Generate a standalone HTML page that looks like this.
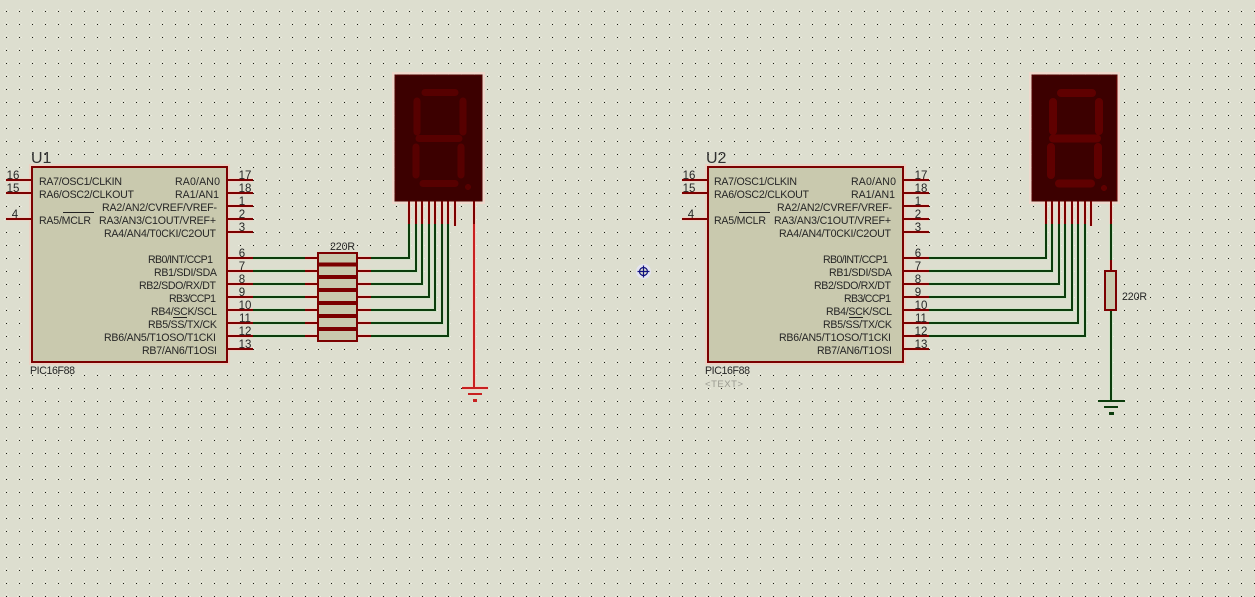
<!DOCTYPE html>
<html><head><meta charset="utf-8"><style>
html,body{margin:0;padding:0;background:#dddecf;width:1255px;height:597px;overflow:hidden}
svg{display:block}
text{font-family:"Liberation Sans",sans-serif;fill:#262626;font-size:10.6px}
.n{font-size:11.5px}
.m{text-anchor:middle}
.b{font-size:16px;fill:#303030}
.p{stroke:#7b0000;stroke-width:2;fill:none}
.g{stroke:#0c3c0c;stroke-width:2;fill:none}
.hp{stroke:#ecd2c4;stroke-width:4;fill:none}
.hg{stroke:#cfe2c6;stroke-width:4;fill:none}
.s1{stroke:#570000;stroke-width:7;stroke-linecap:round;fill:none}
.s2{stroke:#5f0000;stroke-width:8;stroke-linecap:round;fill:none}
</style></head><body>
<svg width="1255" height="597" viewBox="0 0 1255 597" xmlns="http://www.w3.org/2000/svg" shape-rendering="crispEdges">
<defs><pattern id="d" width="13" height="13" patternUnits="userSpaceOnUse">
<rect x="4" y="11" width="1" height="1" fill="#eeeee2"/><rect x="8" y="11" width="1" height="1" fill="#eeeee2"/><rect x="6" y="9" width="1" height="1" fill="#eeeee2"/>
<rect x="6" y="11" width="1" height="1" fill="#1c1c14"/></pattern></defs>
<rect width="1255" height="597" fill="#dddecf"/>
<rect width="1255" height="597" fill="url(#d)"/>

<!-- halos -->
<path class="hp" d="M6 180H32M6 193H32M6 219H32M227 180H253M227 193H253M227 206H253M227 219H253M227 232H253M227 258H253M227 271H253M227 284H253M227 297H253M227 310H253M227 323H253M227 336H253M227 349H253M682 180H708M682 193H708M682 219H708M903 180H929M903 193H929M903 206H929M903 219H929M903 232H929M903 258H929M903 271H929M903 284H929M903 297H929M903 310H929M903 323H929M903 336H929M903 349H929"/>
<path class="hp" d="M305 258H318M305 271H318M305 284H318M305 297H318M305 310H318M305 323H318M305 336H318M357 258H371M357 271H371M357 284H371M357 297H371M357 310H371M357 323H371M357 336H371M474 200V388M462 388H488M409 200V224M416 200V224M422 200V224M429 200V224M435 200V224M442 200V224M448 200V224M455 200V226M1046 200V224M1052 200V224M1059 200V224M1065 200V224M1072 200V224M1078 200V224M1085 200V224M1091 200V226M1111 200V224M1111 260V271"/>
<path class="hg" d="M253 258H305M253 271H305M253 284H305M253 297H305M253 310H305M253 323H305M253 336H305M371 258H409V224M371 271H416V224M371 284H422V224M371 297H429V224M371 310H435V224M371 323H442V224M371 336H448V224M929 258H1046V224M929 271H1052V224M929 284H1059V224M929 297H1065V224M929 310H1072V224M929 323H1078V224M929 336H1085V224M1111 224V260M1111 310V401"/>
<rect x="30" y="165" width="199" height="199" fill="none" stroke="#ecd2c4" stroke-width="2"/>
<rect x="706" y="165" width="199" height="199" fill="none" stroke="#ecd2c4" stroke-width="2"/>
<rect x="393" y="73" width="91" height="130" fill="none" stroke="#f0d8cc" stroke-width="2"/>
<rect x="1030" y="73" width="89" height="130" fill="none" stroke="#f0d8cc" stroke-width="2"/>

<!-- U1 -->
<g>
<path class="p" d="M6 180H32M6 193H32M6 219H32M227 180H253M227 193H253M227 206H253M227 219H253M227 232H253M227 258H253M227 271H253M227 284H253M227 297H253M227 310H253M227 323H253M227 336H253M227 349H253"/>
<rect x="32" y="167" width="195" height="195" fill="#c9c9ae" stroke="#7b0000" stroke-width="2"/>
<path d="M63 212.5H94M173 317.5H187" stroke="#222" stroke-width="1"/>
<g shape-rendering="auto">
<text class="b" x="31" y="163">U1</text>
<text x="39" y="185" textLength="83">RA7/OSC1/CLKIN</text>
<text x="39" y="198" textLength="95">RA6/OSC2/CLKOUT</text>
<text x="39" y="224" textLength="52">RA5/MCLR</text>
<text x="175" y="185" textLength="45">RA0/AN0</text>
<text x="175" y="198" textLength="44">RA1/AN1</text>
<text x="102" y="211" textLength="115">RA2/AN2/CVREF/VREF-</text>
<text x="99" y="224" textLength="117">RA3/AN3/C1OUT/VREF+</text>
<text x="104" y="237" textLength="112">RA4/AN4/T0CKI/C2OUT</text>
<text x="148" y="263" textLength="65">RB0/INT/CCP1</text>
<text x="154" y="276" textLength="63">RB1/SDI/SDA</text>
<text x="139" y="289" textLength="77">RB2/SDO/RX/DT</text>
<text x="169" y="302" textLength="47">RB3/CCP1</text>
<text x="151" y="315" textLength="66">RB4/SCK/SCL</text>
<text x="148" y="328" textLength="69">RB5/SS/TX/CK</text>
<text x="104" y="341" textLength="112">RB6/AN5/T1OSO/T1CKI</text>
<text x="142" y="354" textLength="75">RB7/AN6/T1OSI</text>
<text x="30" y="374" textLength="45">PIC16F88</text>
<text class="n m" x="13" y="179">16</text><text class="n m" x="13" y="192">15</text><text class="n m" x="15" y="218">4</text>
<text class="n m" x="245" y="179">17</text><text class="n m" x="245" y="192">18</text>
<text class="n m" x="242" y="205">1</text><text class="n m" x="242" y="218">2</text><text class="n m" x="242" y="231">3</text>
<text class="n m" x="242" y="257">6</text><text class="n m" x="242" y="270">7</text><text class="n m" x="242" y="283">8</text><text class="n m" x="242" y="296">9</text>
<text class="n m" x="245" y="309">10</text><text class="n m" x="245" y="322">11</text><text class="n m" x="245" y="335">12</text><text class="n m" x="245" y="348">13</text>
</g>
</g>

<!-- U2 -->
<g transform="translate(676 0)">
<path class="p" d="M6 180H32M6 193H32M6 219H32M227 180H253M227 193H253M227 206H253M227 219H253M227 232H253M227 258H253M227 271H253M227 284H253M227 297H253M227 310H253M227 323H253M227 336H253M227 349H253"/>
<rect x="32" y="167" width="195" height="195" fill="#c9c9ae" stroke="#7b0000" stroke-width="2"/>
<path d="M63 212.5H94M173 317.5H187" stroke="#222" stroke-width="1"/>
<g shape-rendering="auto">
<text class="b" x="30" y="163">U2</text>
<text x="38" y="185" textLength="83">RA7/OSC1/CLKIN</text>
<text x="38" y="198" textLength="95">RA6/OSC2/CLKOUT</text>
<text x="38" y="224" textLength="52">RA5/MCLR</text>
<text x="175" y="185" textLength="45">RA0/AN0</text>
<text x="175" y="198" textLength="44">RA1/AN1</text>
<text x="101" y="211" textLength="115">RA2/AN2/CVREF/VREF-</text>
<text x="98" y="224" textLength="117">RA3/AN3/C1OUT/VREF+</text>
<text x="103" y="237" textLength="112">RA4/AN4/T0CKI/C2OUT</text>
<text x="147" y="263" textLength="65">RB0/INT/CCP1</text>
<text x="153" y="276" textLength="63">RB1/SDI/SDA</text>
<text x="138" y="289" textLength="77">RB2/SDO/RX/DT</text>
<text x="168" y="302" textLength="47">RB3/CCP1</text>
<text x="150" y="315" textLength="66">RB4/SCK/SCL</text>
<text x="147" y="328" textLength="69">RB5/SS/TX/CK</text>
<text x="103" y="341" textLength="112">RB6/AN5/T1OSO/T1CKI</text>
<text x="141" y="354" textLength="75">RB7/AN6/T1OSI</text>
<text x="29" y="374" textLength="45">PIC16F88</text>
<text x="29" y="387" textLength="38" style="font-size:9.5px;fill:#9a9a90">&lt;TEXT&gt;</text>
<text class="n m" x="13" y="179">16</text><text class="n m" x="13" y="192">15</text><text class="n m" x="15" y="218">4</text>
<text class="n m" x="245" y="179">17</text><text class="n m" x="245" y="192">18</text>
<text class="n m" x="242" y="205">1</text><text class="n m" x="242" y="218">2</text><text class="n m" x="242" y="231">3</text>
<text class="n m" x="242" y="257">6</text><text class="n m" x="242" y="270">7</text><text class="n m" x="242" y="283">8</text><text class="n m" x="242" y="296">9</text>
<text class="n m" x="245" y="309">10</text><text class="n m" x="245" y="322">11</text><text class="n m" x="245" y="335">12</text><text class="n m" x="245" y="348">13</text>
</g>
</g>

<!-- wires left -->
<path class="g" d="M253 258H305M253 271H305M253 284H305M253 297H305M253 310H305M253 323H305M253 336H305"/>
<path class="p" d="M305 258H318M305 271H318M305 284H318M305 297H318M305 310H318M305 323H318M305 336H318M357 258H371M357 271H371M357 284H371M357 297H371M357 310H371M357 323H371M357 336H371"/>
<path class="g" d="M371 258H409V224M371 271H416V224M371 284H422V224M371 297H429V224M371 310H435V224M371 323H442V224M371 336H448V224"/>
<rect x="318" y="253" width="39" height="88" fill="#c9c9ae" stroke="#7b0000" stroke-width="2"/>
<path d="M318 264.5H357M318 277H357M318 290H357M318 303H357M318 316H357M318 329H357" stroke="#7b0000" stroke-width="4"/>
<text x="330" y="250" textLength="25" shape-rendering="auto">220R</text>

<!-- display 1 -->
<path class="p" d="M409 200V224M416 200V224M422 200V224M429 200V224M435 200V224M442 200V224M448 200V224M455 200V226M474 200V224"/>
<path d="M474 224V388M462 388H488M468 394H482" stroke="#c82020" stroke-width="2" fill="none"/>
<rect x="473" y="399" width="4" height="3" fill="#c82020"/>
<rect x="395" y="75" width="87" height="126" fill="#3c0000" stroke="#5a0000" stroke-width="1"/>
<g class="s1" shape-rendering="auto">
<path d="M425 92.500H455M417 101V132M463 101V132M419 138.500H459M416 147V175M461 147V175M423 183.500H455"/>
</g>
<circle cx="468" cy="187" r="3" fill="#570000"/>

<!-- wires right -->
<path class="g" d="M929 258H1046V224M929 271H1052V224M929 284H1059V224M929 297H1065V224M929 310H1072V224M929 323H1078V224M929 336H1085V224"/>
<path class="p" d="M1046 200V224M1052 200V224M1059 200V224M1065 200V224M1072 200V224M1078 200V224M1085 200V224M1091 200V226M1111 200V224"/>
<path class="g" d="M1111 224V260M1111 310V401M1098 401H1125M1104 407H1118"/>
<rect x="1109" y="412" width="5" height="3" fill="#0c3c0c"/>
<path class="p" d="M1111 260V271"/>
<rect x="1105" y="271" width="11" height="39" fill="#c9c9ae" stroke="#7b0000" stroke-width="2"/>
<text x="1122" y="300" textLength="25" shape-rendering="auto">220R</text>

<!-- display 2 -->
<rect x="1032" y="75" width="85" height="126" fill="#3c0000" stroke="#5a0000" stroke-width="1"/>
<path d="M1117 76V200" stroke="#7b0000" stroke-width="1"/>
<g class="s2" shape-rendering="auto">
<path d="M1061 93H1092M1053 102V131M1099 102V131M1053 138.500H1097M1051 147V175M1098 147V175M1059 183.500H1091"/>
</g>
<circle cx="1104" cy="188" r="3" fill="#5f0000"/>

<!-- crosshair -->
<g shape-rendering="auto" fill="none">
<circle cx="643.500" cy="271.500" r="6" stroke="#e4e4f0" stroke-width="3"/>
<circle cx="643.500" cy="271.500" r="4" stroke="#101080" stroke-width="1.2"/>
<path d="M643.500 265.500V277.500M637.500 271.500H649.500" stroke="#101080" stroke-width="1.2"/>
</g>
</svg>
</body></html>
